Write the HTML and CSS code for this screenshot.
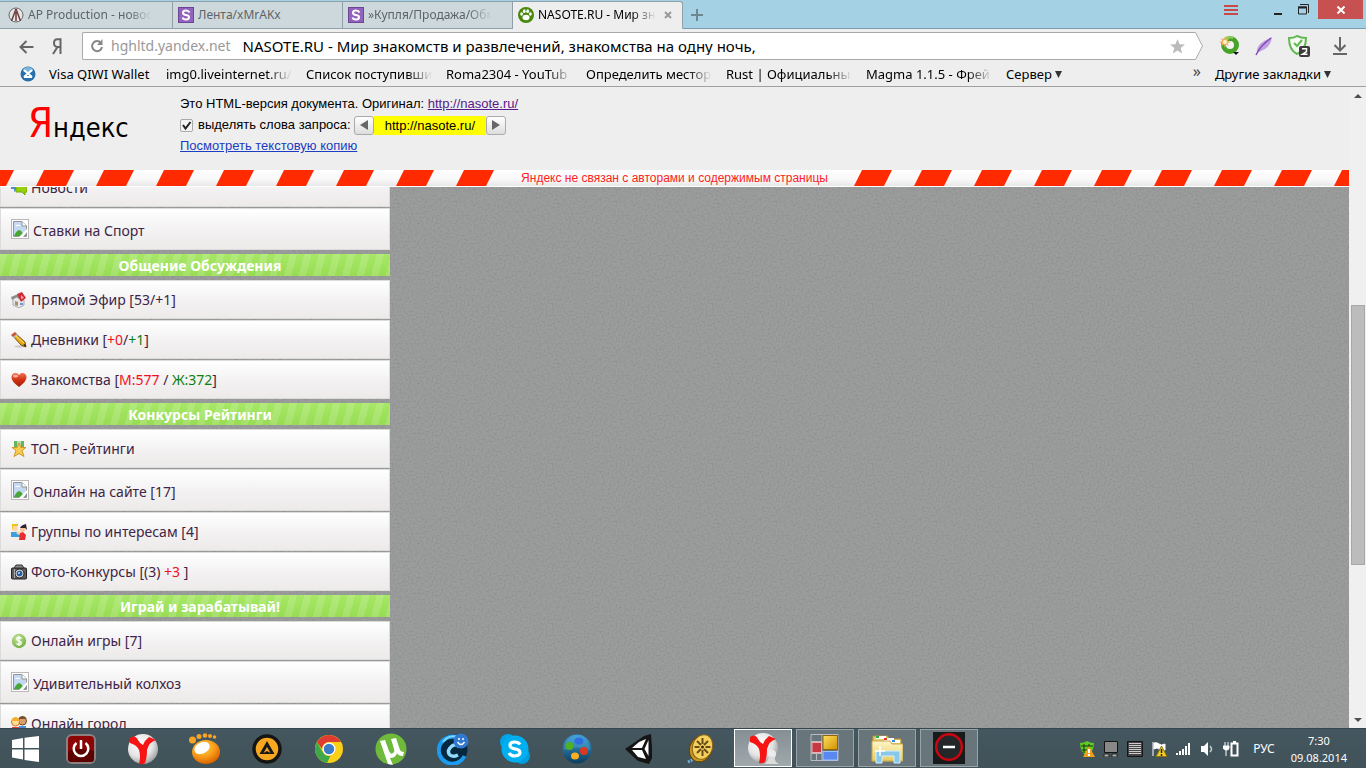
FILE: index.html
```html
<!DOCTYPE html>
<html lang="ru">
<head>
<meta charset="utf-8">
<title>NASOTE.RU - Мир знакомств и развлечений</title>
<link rel="stylesheet" href="styles.css">
</head>
<body>
<svg class="defs" width="0" height="0" aria-hidden="true">
  <defs>
    <linearGradient id="gRed" x1="0" y1="0" x2="0" y2="1"><stop offset="0" stop-color="#f07058"/><stop offset=".5" stop-color="#d03010"/><stop offset="1" stop-color="#a02008"/></linearGradient>
    <linearGradient id="gGold" x1="0" y1="0" x2="1" y2="1"><stop offset="0" stop-color="#ffe060"/><stop offset="1" stop-color="#d09000"/></linearGradient>
    <linearGradient id="gFolder" x1="0" y1="0" x2="0" y2="1"><stop offset="0" stop-color="#fff6c8"/><stop offset="1" stop-color="#e8cc60"/></linearGradient>
    <linearGradient id="gBlue" x1="0" y1="0" x2="0" y2="1"><stop offset="0" stop-color="#3fa0d8"/><stop offset="1" stop-color="#0b3c5c"/></linearGradient>
    <radialGradient id="gBall" cx=".4" cy=".35" r=".7"><stop offset="0" stop-color="#fff"/><stop offset=".6" stop-color="#e4e4e4"/><stop offset="1" stop-color="#999"/></radialGradient>
    <radialGradient id="gOrange" cx=".4" cy=".3" r=".7"><stop offset="0" stop-color="#ffd850"/><stop offset=".6" stop-color="#f89a18"/><stop offset="1" stop-color="#d86400"/></radialGradient>
    <radialGradient id="gGreen" cx=".4" cy=".3" r=".8"><stop offset="0" stop-color="#c8e4a0"/><stop offset="1" stop-color="#6aaa34"/></radialGradient>
    <symbol id="broken" viewBox="0 0 18 20">
      <rect x=".5" y=".5" width="17" height="19" fill="#fff" stroke="#b8b8b8"/>
      <path d="M2.500 2.500h8.500l4.500 4.500v10.500h-13z" fill="#c4d8f4" stroke="#959595"/>
      <path d="M11 2.500v4.500h4.500" fill="#fff" stroke="#959595"/>
      <path d="M4 7q1-2 3-1q2-1 2 1z" fill="#fff"/>
      <path d="M3 17q2-5 5-6q4 1 4 6z" fill="#46a832"/>
      <path d="M8 18l8-8v3l-4 5z" fill="#fff"/>
      <path d="M13 17h2.500v-3z" fill="#8a8a8a"/>
    </symbol>
    <symbol id="sfav" viewBox="0 0 16 16">
      <rect x=".5" y=".5" width="15" height="15" fill="#9163bd" stroke="#6d4594"/>
      <path d="M11.500 5.500q-1-2-3.500-2q-3 0-3 2.200q0 2 3 2.300q3 .4 3 2.300q0 2.200-3 2.200q-2.800 0-3.500-2" fill="none" stroke="#fff" stroke-width="2"/>
    </symbol>
    <symbol id="yball" viewBox="0 0 32 32">
      <circle cx="16" cy="16" r="15" fill="url(#gBall)"/>
      <path d="M3 5q5-4 8 2q2 4 5 5q2-5 6-8l7 3q-7 2-9 10q0 8-2 13q-3 2-6 1q2-8 0-14q-2-5-9-7z" fill="#f81414"/>
    </symbol>
  </defs>
</svg>

<header class="browser">
  <div class="tabstrip">
    <button class="tab"><svg class="i16" viewBox="0 0 16 16"><circle cx="8" cy="8" r="7" fill="#e6e6e6" stroke="#666"/><path d="M8 2L3.500 14M8 2l4.500 12M8 5v9" stroke="#704040" stroke-width="1.500" fill="none"/></svg><span class="fade">AP Production - новос</span></button>
    <button class="tab"><svg class="i16"><use href="#sfav"/></svg><span>Лента/xMrAKx</span></button>
    <button class="tab"><svg class="i16"><use href="#sfav"/></svg><span class="fade">»Купля/Продажа/Обм</span></button>
    <button class="tab active"><svg class="i16" viewBox="0 0 16 16"><circle cx="8" cy="8" r="8" fill="#48880c"/><g fill="#fff"><ellipse cx="8" cy="10.500" rx="3.500" ry="2.800"/><ellipse cx="3.600" cy="7" rx="1.400" ry="1.800"/><ellipse cx="6.300" cy="4.200" rx="1.400" ry="1.900"/><ellipse cx="9.700" cy="4.200" rx="1.400" ry="1.900"/><ellipse cx="12.400" cy="7" rx="1.400" ry="1.800"/></g></svg><span class="fade">NASOTE.RU - Мир зна</span><svg class="i8" viewBox="0 0 8 8"><path d="M1 1l6 6M7 1L1 7" stroke="#999" stroke-width="2"/></svg></button>
    <button class="newtab" aria-label="Новая вкладка"><svg width="12" height="12"><path d="M6 0v12M0 6h12" stroke="#6d8793" stroke-width="2"/></svg></button>
    <div class="wincontrols">
      <button class="menu" aria-label="Меню"><svg width="14" height="10"><path d="M0 1h14M0 5h14M0 9h14" stroke="#cc4848" stroke-width="2"/></svg></button>
      <button class="min" aria-label="Свернуть"><svg width="10" height="10"><path d="M1 9h8" stroke="#222" stroke-width="2"/></svg></button>
      <button class="max" aria-label="Развернуть"><svg width="11" height="11"><path d="M.5 3h8v7h-8z" fill="none" stroke="#222"/><path d="M0 3.500h9" stroke="#222" stroke-width="2"/><path d="M2 .5h8.500V9" fill="none" stroke="#222"/></svg></button>
      <button class="close" aria-label="Закрыть"><svg width="8" height="8"><path d="M.5.5l7 7M7.500.5l-7 7" stroke="#fff" stroke-width="2"/></svg></button>
    </div>
  </div>
  <div class="toolbar">
    <button class="back" aria-label="Назад"><svg width="15" height="14"><path d="M14.500 7H2M7.500 1L1.500 7l6 6" fill="none" stroke="#666" stroke-width="2"/></svg></button>
    <button class="ya" aria-label="Яндекс"><svg width="10" height="17"><path d="M8.500 16V1.200H5.500Q2 1.200 2 5t3.500 4h3M5.500 9L1 16" fill="none" stroke="#666" stroke-width="2"/></svg></button>
    <div class="omni">
      <svg width="14" height="14" viewBox="0 0 14 14"><path d="M11 4A5 5 0 1 0 12 8" fill="none" stroke="#888" stroke-width="2"/><path d="M12.500 0v6H7z" fill="#888"/></svg>
      <label class="host" for="url">hghltd.yandex.net</label>
      <input id="url" type="text" value="NASOTE.RU - Мир знакомств и развлечений, знакомства на одну ночь,">
      <svg width="15" height="15" viewBox="0 0 16 16"><path d="M8 0l2.200 5.600 5.800.3-4.600 3.600L13 15.500 8 12.200 3 15.500l1.600-6L0 5.900l5.800-.3z" fill="#bbb"/></svg>
    </div>
    <svg class="cap" width="9" height="28"><path d="M0 .5h1.500l7 13.500-7 13.500H0z" fill="#fff"/><path d="M0 .5h1.500l7 13.500-7 13.500H0" fill="none" stroke="#aaa"/></svg>
    <div class="exts">
      <button aria-label="Дополнение"><svg width="20" height="20"><circle cx="11" cy="9" r="6.500" fill="#f5f5f5" stroke="#48a428" stroke-width="5"/><path d="M4 8A7 7 0 0 1 14 2" fill="none" stroke="#94d05c" stroke-width="2"/><path d="M6 0l1 3.500L10 2 8.500 5 12 6 8.500 7.200 10 10 7 8.500 6 12 5 8.500 2 10l1.200-2.800L0 6l3.200-1L2 2l3 1.500z" fill="#efb266"/><circle cx="6" cy="6" r="2" fill="#fff2c0"/><path d="M14 16h6l-3 3z" fill="#111"/></svg></button>
      <button aria-label="Перо"><svg width="18" height="19"><path d="M2 16Q1 9 9 4L17 0q-1 8-7 12l-6 3z" fill="#c0a0e0"/><path d="M1 18Q5 9 16 1" stroke="#8448b4" stroke-width="1.500" fill="none"/></svg></button>
      <button aria-label="Защита"><svg width="22" height="22"><path d="M1 3q5 0 8-2 4 2 9 2 0 12-9 16Q1 15 1 3z" fill="#f2faf0" stroke="#63b754" stroke-width="2"/><path d="M6 8l3 3 5-6" stroke="#63b754" stroke-width="2" fill="none"/><rect x="11" y="11" width="11" height="11" rx="2" fill="#3c3c3c"/><path d="M14 13.700h4.500v3L14.500 19.300h5" fill="none" stroke="#fff" stroke-width="1.500"/></svg></button>
      <button aria-label="Загрузки"><svg width="14" height="18"><path d="M7 0v13M1.500 8L7 13.500 12.500 8M0 17h14" fill="none" stroke="#666" stroke-width="2"/></svg></button>
    </div>
  </div>
  <nav class="bookmarks">
    <svg class="bmicon" width="16" height="16"><circle cx="8" cy="8" r="7.500" fill="#2870ac"/><ellipse cx="8" cy="4" rx="5" ry="3" fill="#7cb4dc"/><path d="M4 4l8 7M12 4l-8 7M4 11h8" stroke="#fff" stroke-width="2"/></svg>
    <a href="#" class="plain">Visa QIWI Wallet</a>
    <a href="#" class="fade">img0.liveinternet.ru/i</a>
    <a href="#" class="fade">Список поступивши</a>
    <a href="#" class="fade">Roma2304 - YouTub</a>
    <a href="#" class="fade">Определить местор</a>
    <a href="#" class="fade">Rust | Официальный</a>
    <a href="#" class="fade">Magma 1.1.5 - Фрей</a>
    <a href="#">Сервер <svg width="7" height="9"><path d="M0 2h7L3.500 9z" fill="#333"/></svg></a>
    <span class="more">»</span>
    <a href="#">Другие закладки <svg width="7" height="9"><path d="M0 2h7L3.500 9z" fill="#333"/></svg></a>
  </nav>
</header>

<main class="viewport">
  <div class="page">
    <section class="cache">
      <div class="logo"><span>Я</span>ндекс</div>
      <div class="info">
        <p>Это HTML-версия документа. Оригинал: <a class="visited" href="#">http://nasote.ru/</a></p>
        <div class="row">
          <input type="checkbox" id="hl" checked><label for="hl">выделять слова запроса:</label>
          <span class="pager"><button aria-label="Назад"><svg width="8" height="10"><path d="M8 0v10L0 5z" fill="#666"/></svg></button><mark>http://nasote.ru/</mark><button aria-label="Вперёд"><svg width="8" height="10"><path d="M0 0v10l8-5z" fill="#666"/></svg></button></span>
        </div>
        <p><a href="#">Посмотреть текстовую копию</a></p>
      </div>
    </section>
    <div class="tape">
      <svg><defs><pattern id="tl" x="36" width="60" height="16" patternUnits="userSpaceOnUse"><path d="M8 0h30l-8 16H0z" fill="#ff2a00"/></pattern></defs><rect width="100%" height="16" fill="url(#tl)"/></svg>
      <span>Яндекс не связан с авторами и содержимым страницы</span>
      <svg><defs><pattern id="tr" width="60" height="16" patternUnits="userSpaceOnUse"><path d="M8 0h30l-8 16H0z" fill="#ff2a00"/></pattern></defs><rect width="100%" height="16" fill="url(#tr)"/></svg>
    </div>
    <div class="frame">
      <nav class="side">
        <ul class="first">
          <li><a href="#"><svg class="i16"><path d="M0 3h9v6H6l-3 3V9H0z" fill="#4f8ec8"/><path d="M5 3h11v9h-2v3l-3-3H5z" fill="#98d010" stroke="#70a808"/></svg>Новости</a></li>
          <li><a href="#"><svg class="broken"><use href="#broken"/></svg><span>Ставки на Спорт</span></a></li>
        </ul>
        <h2>Общение Обсуждения</h2>
        <ul>
          <li><a href="#"><svg class="i16"><path d="M2 6l4-1 7 3v5l-5 3-6-3z" fill="#e8e8e8" stroke="#aaa"/><path d="M0 5l7-3 2 6-3-3-5 3z" fill="#8c8c8c"/><path d="M6 2l5-2 4 6-5 4z" fill="#d02c38"/><path d="M10 3l3 3-3 1z" fill="#f4aab0"/><path d="M4 9v4l3 1v-4z" fill="#a89070"/><path d="M9 11h3v2H9z" fill="#7098c8"/></svg>Прямой Эфир [53/+1]</a></li>
          <li><a href="#"><svg class="i16"><ellipse cx="9" cy="14.500" rx="6" ry="1.200" fill="#ccc"/><path d="M1 3l3-2 10 9 1 5-5-2z" fill="#e8a818" stroke="#80500c"/><path d="M0 3l4-3 2 2-4 3z" fill="#c85838"/><path d="M2 5l4-3 1 1-4 3z" fill="#bcc4cc"/><path d="M5 4l8 7" stroke="#ffe070" stroke-width="1"/><path d="M12 13l3 2-1-3z" fill="#222"/></svg>Дневники [<i>+0</i>/<b>+1</b>]</a></li>
          <li><a href="#"><svg class="i16"><path d="M8 15Q0 9 .5 5 1 1 4.500 1 7 1 8 3q1-2 3.500-2Q15 1 15.500 5 16 9 8 15z" fill="url(#gRed)"/><ellipse cx="4.500" cy="4" rx="2.500" ry="1.500" fill="#f8b09c"/></svg>Знакомства [<i>М:577</i> / <b>Ж:372</b>]</a></li>
        </ul>
        <h2>Конкурсы Рейтинги</h2>
        <ul>
          <li><a href="#"><svg class="i16"><path d="M3 0h10v6H3z" fill="#64b464"/><path d="M6 0h4v6H6z" fill="#b4e0b0"/><path d="M8 2l2 4.500h5L11 9.500l2 6-5-3-5 3 2-6L1 6.500h5z" fill="#f8cc50" stroke="#d09824"/></svg>ТОП - Рейтинги</a></li>
          <li><a href="#"><svg class="broken"><use href="#broken"/></svg><span>Онлайн на сайте [17]</span></a></li>
          <li><a href="#"><svg class="i16"><path d="M0 8h9v5H0z" fill="#3ca0e0"/><circle cx="4" cy="4.500" r="3" fill="#fcd8a8"/><path d="M1 0h6v2H2v3H1z" fill="#f0c020"/><path d="M5 9l3-2 2 2-2 2z" fill="#fcd8a8"/><path d="M9 9l3-1 3 3-1 5H8z" fill="#e82c30"/><circle cx="11.500" cy="5.500" r="2.500" fill="#f8c498"/><path d="M9 4q1-3 6-4l1 6-2-2z" fill="#302030"/></svg>Группы по интересам [4]</a></li>
          <li><a href="#"><svg class="i16"><rect x=".5" y="4" width="15" height="11" rx="1" fill="#5c5c5c" stroke="#222"/><path d="M3 4l2-3h6l2 3z" fill="#888" stroke="#333"/><circle cx="8.500" cy="9.500" r="4.500" fill="#ccc" stroke="#222"/><circle cx="8.500" cy="9.500" r="2.800" fill="#235a9c"/><circle cx="8" cy="9" r="1" fill="#b8dcff"/><path d="M3.500 5v9" stroke="#aaa"/></svg>Фото-Конкурсы [(3) <i>+3</i> ]</a></li>
        </ul>
        <h2>Играй и зарабатывай!</h2>
        <ul>
          <li><a href="#"><svg class="i16"><circle cx="8" cy="8" r="7.200" fill="url(#gGreen)"/><path d="M10.500 5.500Q9.500 4.500 8 4.500q-2.200 0-2.200 1.600Q5.800 7.500 8 8t2.300 1.900q0 1.600-2.300 1.600-1.500 0-2.500-1M8 3v10" fill="none" stroke="#fff" stroke-width="1.300"/></svg>Онлайн игры [7]</a></li>
          <li><a href="#"><svg class="broken"><use href="#broken"/></svg><span>Удивительный колхоз</span></a></li>
          <li><a href="#"><svg class="i16"><circle cx="11.500" cy="5" r="4" fill="#d8a070" stroke="#6c4420"/><path d="M7.500 3q1-3 4-3t4 3z" fill="#78502c"/><path d="M8 10h7v6H8z" fill="#4490d8"/><circle cx="4.500" cy="6" r="4" fill="#ffdc90" stroke="#cc7c20"/><path d="M.5 5q1-4 4-4t4 4z" fill="#f0b030"/><path d="M1 11h7v5H1z" fill="#e04040"/></svg>Онлайн город</a></li>
        </ul>
      </nav>
    </div>
  </div>
  <div class="scroll" aria-hidden="true">
    <svg width="8" height="4"><path d="M0 4h8L4 0z" fill="#505050"/></svg>
    <div class="track"><div class="thumb"></div></div>
    <svg width="8" height="4"><path d="M0 0h8L4 4z" fill="#505050"/></svg>
  </div>
</main>

<footer class="taskbar">
  <button class="start" aria-label="Пуск"><svg width="27" height="26"><path d="M0 4l11-2v10H0zM12.500 1.800L27 0v12H12.500zM0 13.500h11v10L0 21.500zM12.500 13.500H27V26l-14.500-2z" fill="#fff"/></svg></button>
  <div class="apps">
    <button aria-label="Питание"><svg class="i32" viewBox="0 0 32 32"><rect x="2" y="2" width="28" height="28" rx="5" fill="#8c0404" stroke="#8c8080" stroke-width="2"/><path d="M3 18q13-4 26 0v8q0 3-3 3H6q-3 0-3-3z" fill="#5c0000"/><path d="M11.500 10a7.300 7.300 0 1 0 9 0M16 7v9" fill="none" stroke="#fff" stroke-width="2.500"/></svg></button>
    <button aria-label="Яндекс.Браузер"><svg class="i32"><use href="#yball"/></svg></button>
    <button aria-label="GOM"><svg class="i32" viewBox="0 0 32 32"><ellipse cx="17" cy="19" rx="14" ry="12" fill="url(#gOrange)"/><ellipse cx="13" cy="15" rx="8" ry="5.500" transform="rotate(-25 13 15)" fill="#fff"/><g fill="#f8a424"><circle cx="3.500" cy="7" r="3.500"/><circle cx="10" cy="3.500" r="2.500"/><circle cx="16" cy="2.500" r="2.300"/><circle cx="21" cy="3" r="2"/><circle cx="25.500" cy="4" r="1.800"/></g></svg></button>
    <button aria-label="AIMP"><svg class="i32" viewBox="0 0 32 32"><circle cx="16" cy="16" r="13" fill="#f8a820" stroke="#151515" stroke-width="3.500"/><path d="M16 8l7.500 13h-15z" fill="#181818"/><path d="M16 14l3.500 6-3.500-2-3.500 2z" fill="#f8a820"/></svg></button>
    <button aria-label="Chrome"><svg class="i32" viewBox="0 0 32 32"><circle cx="16" cy="16" r="14" fill="#f9cf18"/><path d="M3.900 9A14 14 0 0 1 28.100 9H16a7 7 0 0 0-7 7z" fill="#dc3d30"/><path d="M3.900 9l6.100 10.500a7 7 0 0 0 7.500 3.300L14 29.900A14 14 0 0 1 3.900 9z" fill="#40a848"/><circle cx="16" cy="16" r="6.500" fill="#fff"/><circle cx="16" cy="16" r="5.200" fill="#3a7cc8"/></svg></button>
    <button aria-label="uTorrent"><svg class="i32" viewBox="0 0 32 32"><circle cx="16" cy="16" r="15.500" fill="#6fba3a"/><path d="M5 8l5-1 4 11q2 4 4 2 2-1 1-4L16 6l5-1 4 12q1 2 4 2l-1 4q-5 0-6-3-1 5-7 5l3 7-5-1z" fill="#fff"/></svg></button>
    <button aria-label="Мессенджер"><svg class="i32" viewBox="0 0 32 32"><circle cx="15.500" cy="16.500" r="15" fill="#06283e"/><path d="M20 4.500A13.500 13.500 0 1 0 27.500 23" fill="none" stroke="#1c9cf0" stroke-width="4"/><path d="M6 9A13.500 13.500 0 0 1 19 3.500" fill="none" stroke="#7cd8ff" stroke-width="2"/><path d="M22 14q-3-4-7-1-5 4-3 8 3 4 9 1" fill="none" stroke="#90dcff" stroke-width="3.500"/><circle cx="24" cy="8" r="7.500" fill="#3078d0"/><path d="M20.500 9q3.500 5 7 0" fill="none" stroke="#fff" stroke-width="1.500"/><path d="M22 5v2M26 5v2" stroke="#fff" stroke-width="1.500"/></svg></button>
    <button aria-label="Skype"><svg class="i32" viewBox="0 0 32 32"><circle cx="9" cy="9" r="8" fill="#00a4e8"/><circle cx="23" cy="23" r="8" fill="#009cdc"/><circle cx="16" cy="16" r="13.500" fill="#00aff0"/><path d="M21 11.500Q19.500 9 15.500 9q-4.500 0-4.500 3.200 0 2.800 4.800 3.600 5.200.8 5.200 3.800T16 23q-4.500 0-6-3" fill="none" stroke="#fff" stroke-width="3.200"/></svg></button>
    <button aria-label="Игры"><svg class="i32" viewBox="0 0 32 32"><circle cx="16" cy="16" r="14.500" fill="url(#gBlue)"/><path d="M3 17q13-5 26 0Q28 4 16 3 4 4 3 17z" fill="#58b8e4" opacity=".3"/><ellipse cx="18" cy="8" rx="4.500" ry="3.500" fill="#306ce0"/><circle cx="8.500" cy="13" r="4" fill="#50b024"/><circle cx="23" cy="18" r="4" fill="#dc3820"/><ellipse cx="14" cy="23" rx="4" ry="3.500" fill="#f8b020"/></svg></button>
    <button aria-label="Unity"><svg class="i32" viewBox="0 0 32 32"><path d="M2 16L21 3l7-2 1 14 0 10-3 6-11-3z" fill="#151515"/><path d="M16 9l7-3-4 9H9zM9 17h10l4 9-8-2zM25.500 7v16L21.500 16z" fill="#fff"/></svg></button>
    <button aria-label="Видео"><svg class="i32" viewBox="0 0 32 32"><path d="M3 29l8-4" stroke="#70b0dc" stroke-width="3" stroke-dasharray="2 1"/><ellipse cx="15.500" cy="16" rx="11" ry="13" transform="rotate(18 15.500 16)" fill="#c89420" stroke="#604408"/><ellipse cx="17.500" cy="14" rx="10" ry="12.500" transform="rotate(18 17.500 14)" fill="#f4d060" stroke="#886010"/><path d="M17.500 5v6M17.500 17v6M9.500 14h5M20.500 14h5M12 8l4 4M19 16l4 4M23 8l-4 4M16 16l-4 4" stroke="#674d14" stroke-width="2"/><circle cx="17.500" cy="14" r="1.500" fill="#402c00"/></svg></button>
    <button class="win on" aria-label="Яндекс.Браузер, окно"><svg class="i32" viewBox="0 0 32 32"><use href="#yball"/><circle cx="25" cy="22" r="4" fill="#ececec"/><path d="M22 24q-1 6-5 8h15q-5-2-4-7z" fill="#dcdcdc"/></svg></button>
    <button class="win" aria-label="Таблица"><svg class="i32" viewBox="0 0 32 32"><path d="M2 2.500h27v26H2zM2 9.500h11M2 21.500h11M7.500 22v7M13 2v27" fill="none" stroke="#b8bcc4"/><rect x="14" y="3.500" width="14.500" height="14" fill="url(#gGold)" stroke="#906400"/><rect x="3" y="10.500" width="9.500" height="10" fill="#c83840" stroke="#ecb0b0"/><rect x="14" y="19.500" width="14.500" height="8.500" fill="#5888f0" stroke="#9cc0ff"/></svg></button>
    <button class="win" aria-label="Проводник"><svg class="i32" viewBox="0 0 32 32"><path d="M2 4h15v3h13v22H1z" fill="#e8c868" stroke="#b49440"/><path d="M5 4h10v3H5zM13 6h10v3H13zM20 8h9v3h-9z" fill="#fff"/><path d="M5 4h3v2H5z" fill="#28b440"/><path d="M13 6h3v2h-3z" fill="#d83c28"/><path d="M21 8h3v2h-3z" fill="#2890e0"/><path d="M1 9h18l2 3h11v17H1z" fill="url(#gFolder)" stroke="#c8a850"/><path d="M5 31V19h24v12h-6v-7H11v7z" fill="#88c8e8" stroke="#d4f0fc"/><path d="M9 14v10M4 19h10" stroke="#fff" stroke-width="1.500"/></svg></button>
    <button class="win" aria-label="Запись"><svg class="i32" viewBox="0 0 32 32"><path d="M0 0h32v32H0z" fill="#191a1c"/><circle cx="16" cy="15" r="12.800" fill="#24272a" stroke="#c80810" stroke-width="2.500"/><path d="M10 15h12" stroke="#fff" stroke-width="2.500"/></svg></button>
  </div>
  <div class="tray">
    <svg class="i16"><path d="M1 2q4 0 7-2 3 2 7 2 0 9-7 13Q1 11 1 2z" fill="#60c828"/><path d="M2 5h12M3 9h6M5 3v9M10 3v4" stroke="#173807"/><path d="M10 5l6 11H4z" fill="#f0a018"/><path d="M10 8v4M10 13v2" stroke="#fff" stroke-width="2"/></svg>
    <svg class="i16"><path d="M1.500.5h13v11h-13z" fill="#888" stroke="#141414"/><path d="M1 13h5v3H1zM9 13h5v3H9z" fill="#b0b0b0" stroke="#252525"/></svg>
    <svg class="i16"><path d="M.5.500h15v15H.5z" fill="#444" stroke="#151515"/><path d="M2 2.500h12M2 4.500h12M2 6.500h12M2 8.500h12M2 10.500h12M2 12.500h12" stroke="#ccc"/></svg>
    <svg class="i16"><path d="M2 1v14M3 2q3-1 5 1t6 0v6q-4 1-6-1t-5 0z" fill="#fff" stroke="#fff"/><path d="M10.500 5l5.500 10.500H5z" fill="#f4cc28" stroke="#8a7408"/><path d="M10.500 8v4M10.500 13v2" stroke="#222" stroke-width="1.500"/></svg>
    <svg class="i16"><path d="M1 14v-2h2v2zM4 14v-4h2v4zM7 14V8h2v6zM10 14V5h2v9zM13 14V2h2v12z" fill="#fff"/></svg>
    <svg class="i16"><path d="M2 5h3l4-4v14l-4-4H2z" fill="#fff"/><path d="M11 5q3 3 0 6" stroke="#ccc" stroke-width="1.500" fill="none"/></svg>
    <svg class="i16"><path d="M2 1v4M5 1v4M0 5h6v2q0 2-2.500 2T0 7zM3 8v7" stroke="#fff" fill="#fff"/><path d="M8.500 2.500h6v12h-6zM10 1h3" fill="none" stroke="#fff" stroke-width="2"/></svg>
    <span class="lang">РУС</span>
    <time class="clock"><span>7:30</span><span>09.08.2014</span></time>
  </div>
</footer>
</body>
</html>
```
FILE: styles.css
```css
* { box-sizing: border-box; }

body {
  margin: 0;
  height: 100vh;
  display: flex;
  flex-direction: column;
  overflow: hidden;
  background: #eee;
  color: #000;
  font: 13px/18px "Noto Sans", sans-serif;
}

button {
  display: flex;
  align-items: center;
  justify-content: center;
  margin: 0;
  padding: 0;
  border: 0;
  background: none;
  font: inherit;
  color: inherit;
}

svg { display: block; flex: none; }
.defs { position: absolute; }
.i8 { width: 8px; height: 8px; }
.i16 { width: 16px; height: 16px; }
.i32 { width: 32px; height: 32px; }

.fade {
  overflow: hidden;
  white-space: nowrap;
  mask-image: linear-gradient(to left, transparent, #000 24px);
}

/* Tabs */
.tabstrip {
  display: flex;
  height: 29px;
  padding-top: 1px;
  background: #a4d1e4;
  box-shadow: inset 0 -1px #7c9cae;
}

.tab {
  flex: 0 1 auto;
  width: 170px;
  min-width: 0;
  gap: 4px;
  padding: 0 20px 0 5px;
  justify-content: flex-start;
  border: solid #8fa0a8;
  border-width: 1px 1px 1px 0;
  background: #cdd8dc;
  color: #5c6468;
  font-size: 12px;
}
.tab:first-child { width: 173px; padding-left: 8px; }

.tab .fade { flex: 1; min-width: 0; text-align: left; }
.tab.active {
  padding-right: 10px;
  border-bottom-color: #eee;
  border-radius: 0 3px 0 0;
  background: #eee;
  color: #000;
}
.tab.active .fade { margin-right: 4px; }
.newtab { width: 28px; }

.wincontrols {
  display: flex;
  align-items: flex-start;
  margin: -1px 3px 0 auto;
}
.wincontrols button { height: 19px; }
.menu { width: 74px; }
.min { width: 20px; }
.max { width: 30px; }
.close { width: 45px; background: #c75050; }

/* Address bar */
.toolbar { display: flex; height: 32px; padding: 3px 19px 0 18px; }
.back { width: 16px; }
.ya { width: 48px; padding-right: 2px; }
.omni {
  flex: 1;
  display: flex;
  align-items: center;
  height: 28px;
  padding: 0 9px 0 7px;
  border: 1px solid #aaa;
  border-right: 0;
  border-radius: 2px 0 0 2px;
  background: #fff;
  font-size: 15px;
}
.host { margin: 0 12px 0 7px; color: #999; font-size: 14px; }
.omni input {
  flex: 1;
  min-width: 0;
  padding: 0;
  border: 0;
  outline: 0;
  background: none;
  font: inherit;
}
.exts { display: flex; height: 28px; }
.exts button { width: 34px; margin-left: 1px; }
.exts button:first-child { margin-left: 9px; }
.exts button:last-child { width: 14px; margin-left: 17px; }

/* Bookmarks */
.bookmarks {
  display: flex;
  gap: 14px;
  height: 26px;
  padding: 0 35px 0 20px;
  align-items: center;
  border-bottom: 1px solid #a0a0a0;
  white-space: nowrap;
}
.bmicon { margin-right: -1px; }
.bookmarks a { display: flex; align-items: center; gap: 3px; color: #000; text-decoration: none; }
.bookmarks .plain { min-width: 103px; }
.bookmarks .fade { width: 126px; }
.more { margin-left: auto; color: #444; font-size: 16px; line-height: 18px; padding-bottom: 6px; }

/* Viewport */
.viewport { flex: 1; min-height: 0; display: flex; }
.page { flex: 1; min-width: 0; display: flex; flex-direction: column; font: 13px/18px "Liberation Sans", Arial, sans-serif; }
.scroll {
  display: flex;
  flex-direction: column;
  align-items: center;
  width: 17px;
  padding: 7px 0 6px;
  background: #f0f0f0;
}
.track { flex: 1; align-self: stretch; padding: 0 1px 0 2px; }
.thumb { height: 42%; margin-top: 207px; border: 1px solid #a8a8a8; background: #bcbcbc; }

.cache { display: flex; height: 83px; padding: 8px 30px 8px 28px; }
.logo {
  width: 152px;
  padding-top: 8px;
  font: 27px/40px "DejaVu Sans Condensed", "DejaVu Sans", sans-serif;
}
.logo span { color: #f00; font-size: 40px; }
.info p { margin: 0; }
.info a { color: #1a3dc1; }
.info a.visited { color: #551a8b; }
.row { display: flex; align-items: center; height: 24px; }
.row input {
  appearance: none;
  width: 13px;
  height: 13px;
  margin: 0 5px 0 0;
  border: 1px solid #aaa;
  border-radius: 2px;
  background: #f4f4f4 url("data:image/svg+xml,%3Csvg xmlns='http://www.w3.org/2000/svg' width='11' height='11'%3E%3Cpath d='M2 5l2.500 3.500L9.500 2' fill='none' stroke='%23222' stroke-width='2'/%3E%3C/svg%3E");
}
.pager { display: flex; height: 19px; margin-left: 3px; line-height: 19px; }
.pager button { width: 20px; border: 1px solid #aaa; border-radius: 3px; background: linear-gradient(#fff, #ddd); }
.pager mark { padding: 0 11px; background: #ff0; }

.tape {
  display: flex;
  height: 17px;
  border-bottom: 1px solid #fff;
  background: linear-gradient(#fff, #f8f8f8 60%, #e8e8e8);
  color: #f22;
  font-size: 12px;
  line-height: 16px;
  white-space: nowrap;
}
.tape svg { flex: 1 1 0; width: 0; min-width: 0; height: 16px; }
.tape span { padding: 0 26px; }

.frame {
  flex: 1;
  min-height: 0;
  overflow: hidden;
  background: #9c9e9d url("data:image/svg+xml,%3Csvg xmlns='http://www.w3.org/2000/svg' width='160' height='160'%3E%3Cfilter id='n' x='0' y='0' width='1' height='1'%3E%3CfeTurbulence type='fractalNoise' baseFrequency='.5' numOctaves='2' stitchTiles='stitch'/%3E%3CfeColorMatrix values='0 0 0 0 .15 0 0 0 0 .15 0 0 0 0 .15 .6 0 0 0 -.22'/%3E%3C/filter%3E%3Crect width='160' height='160' filter='url(%23n)'/%3E%3C/svg%3E");
}

/* Side menu */
.side { width: 390px; font: 14px/17px "Noto Sans", sans-serif; }
.side ul { display: grid; gap: 1px; margin: 0; padding: 0; list-style: none; }
.side .first { margin-top: -19px; }
.side li { border: 1px solid #dcdcdc; background: linear-gradient(#fff, #f2f0f0 60%, #edebea); }
.side a {
  display: flex;
  align-items: center;
  min-height: 37px;
  padding-left: 10px;
  color: #402545;
  text-decoration: none;
  white-space: pre;
}
.side .i16 { margin-right: 4px; }
.side .broken { width: 18px; height: 20px; margin: 10px 4px 10px 0; }
.side .broken + span { padding-top: 2px; }
.side i { color: #f01020; font-style: normal; }
.side b { color: #108010; font-weight: normal; }
.side h2 {
  height: 22px;
  margin: 4px 0;
  padding-left: 10px;
  background:
    repeating-linear-gradient(105deg, rgba(255, 255, 255, .14) 0 7px, transparent 7px 14px),
    linear-gradient(#a6e866, #98dc54);
  color: #fff;
  font: bold 14px/23px "Noto Sans", sans-serif;
  text-align: center;
}

/* Taskbar */
.taskbar {
  display: flex;
  height: 40px;
  padding-right: 19px;
  background: linear-gradient(#44565f, #415258);
  border-top: 1px solid #35464d;
  color: #fff;
  font-size: 12px;
}
.start { width: 52px; padding-right: 2px; }
.apps { display: flex; gap: 4px; }
.apps button { width: 58px; }
.apps .win { height: 38px; border: 1px solid #9aa4a8; background: #68757b; }
.apps .win.on { border: 1px solid #fff; background: linear-gradient(#848f94, #a0a8ab); }
.tray { display: flex; align-items: center; gap: 8px; margin-left: auto; }
.lang { margin: 0 8px 0 6px; }
.clock { display: grid; font-size: 11px; line-height: 17px; text-align: center; }
```
